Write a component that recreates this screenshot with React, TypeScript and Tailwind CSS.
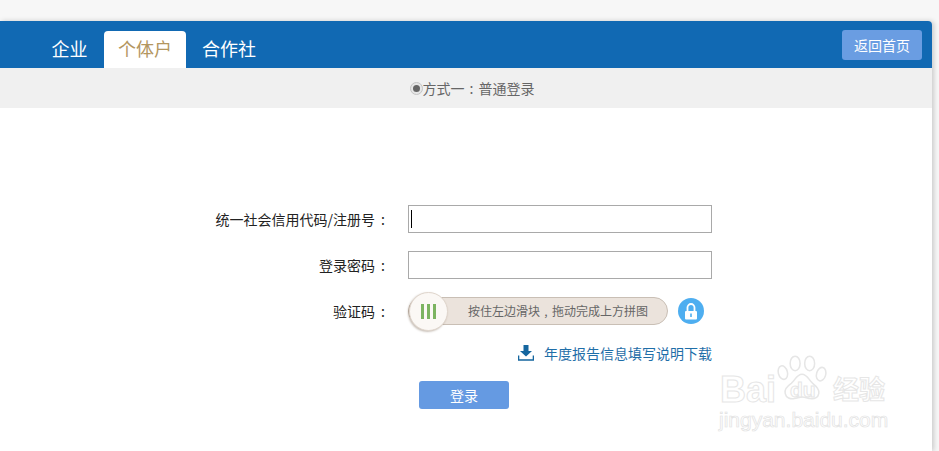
import { FC, ReactNode } from "react";

const cjk = "font-['Noto_Sans_CJK_SC','Liberation_Sans',sans-serif]";

const Row: FC<{ label: string; children: ReactNode; className?: string }> = ({ label, children, className }) => (
    <div className={`flex items-center ${className ?? ""}`}>
        <label className="w-[388px] flex justify-end text-[14px] text-[#222]">
            <span>{label}</span>
            <span className="w-[13px] text-right pr-[3px]">:</span>
        </label>
        <div className="ml-5 flex items-center">{children}</div>
    </div>
);

const Watermark = () => (
    <div className="absolute left-[720px] top-[349px] w-[180px] h-[90px] pointer-events-none select-none">
        <svg width="52" height="55" viewBox="0 0 68 62" className="absolute left-[56px] top-[3px]" fill="none" stroke="#e6e6e6" strokeWidth="2">
            <ellipse cx="9" cy="22" rx="6" ry="9" transform="rotate(-15 9 22)" />
            <ellipse cx="25" cy="10" rx="6.5" ry="9.5" />
            <ellipse cx="44" cy="10" rx="6.5" ry="9.5" />
            <ellipse cx="59" cy="24" rx="6" ry="9" transform="rotate(15 59 24)" />
            <path d="M34 24c-7 0-9 8-14 12-6 4-9 8-8 13 1 6 7 8 12 7 5-1 7-2 10-2s6 1 11 2c5 1 10-1 11-7 1-5-3-9-8-13-5-4-7-12-14-12z" />
        </svg>
        <span className="absolute left-[0px] top-[19px] text-[36px] leading-[44px] font-['Liberation_Sans',sans-serif] font-bold text-white [-webkit-text-stroke:1px_#e6e6e6]">Bai</span>
        <span className="absolute left-[70px] top-[30px] text-[21px] leading-[22px] font-['Liberation_Sans',sans-serif] font-bold text-white [-webkit-text-stroke:1px_#e6e6e6]">du</span>
        <span className="absolute left-[113px] top-[21px] text-[26px] leading-[36px] font-bold text-white [-webkit-text-stroke:1px_#e6e6e6]">经验</span>
        <span className="absolute left-[-1px] top-[59px] text-[21px] leading-[24px] font-['Liberation_Sans',sans-serif] text-white [-webkit-text-stroke:0.7px_#e2e2e2]">jingyan.baidu.com</span>
    </div>
);

const App = () => {
    return (
        <div className={`relative w-[939px] h-[451px] overflow-hidden bg-[#f7f7f7] pt-[21px] ${cjk}`}>
            <div className="w-[932px] h-[430px] bg-white rounded-tr-[4px] shadow-[2px_0_5px_rgba(0,0,0,0.18)]">
                <div className="h-[47px] bg-[#1169b3] rounded-tr-[4px] flex items-end pl-[35px] pr-[10px] relative">
                    <a className="w-[69px] h-[37px] pb-[3px] flex items-center justify-center text-[18px] text-white">企业</a>
                    <a className="w-[82px] h-[37px] pb-[3px] flex items-center justify-center text-[18px] text-[#b3965f] bg-white rounded-t-[4px]">个体户</a>
                    <a className="w-[86px] h-[37px] pb-[3px] flex items-center justify-center text-[18px] text-white">合作社</a>
                    <button className="absolute right-[10px] top-[9px] w-[80px] h-[30px] rounded-[3px] bg-[#6a9de2] text-white text-[14px]">返回首页</button>
                </div>
                <div className="h-[40px] bg-[#f0f0f0] flex items-center justify-center text-[14px] text-[#666] pl-[12px]">
                    <span className="w-[13px] h-[13px] rounded-full border border-[#c4c4c4] bg-[#e6e6e6] flex items-center justify-center">
                        <span className="w-[7px] h-[7px] rounded-full bg-[#666]" />
                    </span>
                    <span>方式一<span className="inline-block w-[14px] text-center">:</span>普通登录</span>
                </div>
                <div className="pt-[97px]">
                    <Row label="统一社会信用代码/注册号">
                        <div className="w-[304px] h-[28px] border border-[#a9a9a9] bg-white flex items-center pl-[2px]">
                            <span className="w-px h-[18px] bg-black" />
                        </div>
                    </Row>
                    <Row label="登录密码" className="mt-[18px]">
                        <div className="w-[304px] h-[28px] border border-[#a9a9a9] bg-white" />
                    </Row>
                    <Row label="验证码" className="mt-[18px]">
                        <div className="w-[260px] h-[28px] rounded-[14px] bg-[#ebe3dc] border border-[#c9bfb5] flex items-center relative">
                            <div className="absolute left-[0px] top-[-6px] w-[39px] h-[39px] rounded-full bg-[#fbf8f5] border border-[#e0d6cd] shadow-[-1px_1px_2px_rgba(120,100,80,0.4)] flex items-center justify-center gap-[3px]">
                                <span className="w-[3px] h-[15px] bg-[#7cb461]" />
                                <span className="w-[3px] h-[15px] bg-[#7cb461]" />
                                <span className="w-[3px] h-[15px] bg-[#7cb461]" />
                            </div>
                            <span className="ml-[59px] text-[12px] text-[#666] whitespace-nowrap">按住左边滑块<span className="inline-block w-[12px] text-center">,</span>拖动完成上方拼图</span>
                        </div>
                        <div className="ml-[10px] w-[26px] h-[26px] rounded-full bg-[#4eaef0] flex items-center justify-center">
                            <svg width="14" height="17" viewBox="0 0 14 17" fill="none">
                                <path d="M3.5 8V4.5a3.5 3.5 0 0 1 7 0V8" stroke="#fff" strokeWidth="1.8" />
                                <rect x="1" y="8" width="12" height="8.5" rx="1" fill="#fff" />
                                <rect x="6.2" y="10.5" width="1.6" height="3.5" fill="#4eaef0" />
                            </svg>
                        </div>
                    </Row>
                    <div className="w-[712px] mt-[18px] flex items-center justify-end text-[14px] leading-[20px] text-[#1f6ea8]">
                        <svg width="16" height="16" viewBox="0 0 16 16" className="mr-[10px]">
                            <path d="M5.5 0h5v6H14L8 11.5 2 6h3.5z" fill="#15669f" />
                            <path d="M0.5 10.5V15h15v-4.5" fill="none" stroke="#15669f" strokeWidth="1.6" />
                        </svg>
                        <span>年度报告信息填写说明下载</span>
                    </div>
                    <div className="pl-[419px] mt-[18px]">
                        <button className="w-[90px] h-[28px] rounded-[3px] bg-[#659ae2] text-white text-[14px]">登录</button>
                    </div>
                </div>
            </div>
            <Watermark />
        </div>
    );
};

export default App;
